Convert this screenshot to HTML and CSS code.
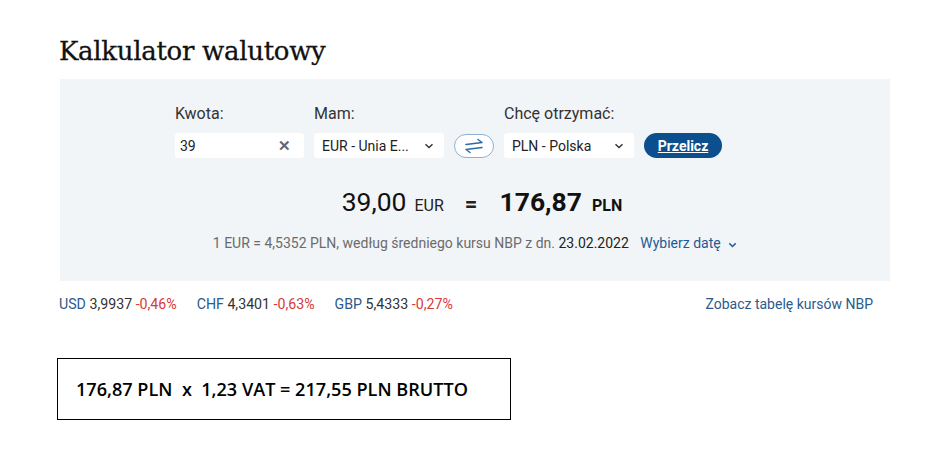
FILE: index.html
```html
<!DOCTYPE html>
<html>

<head>
    <title>Kalkulator walutowy</title>
    <meta charset="UTF-8">
    <link rel="stylesheet" href="styles.css">
</head>

<body>
    <div class="page">
        <h1>Kalkulator walutowy</h1>

        <div class="calc">
            <form class="calc-form">
                <label class="lbl col-amount" for="amount">Kwota:</label>
                <label class="lbl col-have" for="have">Mam:</label>
                <label class="lbl col-want" for="want">Chcę otrzymać:</label>

                <div class="field col-amount">
                    <span id="amount">39</span>
                    <span class="clear">&#x2715;</span>
                </div>
                <div class="field col-have">
                    <span id="have">EUR - Unia E...</span>
                    <svg class="chev" width="10" height="6" viewBox="0 0 10 6"><path d="M1.5 1.2 5 4.6 8.5 1.2" fill="none" stroke="#333" stroke-width="1.4"/></svg>
                </div>
                <button type="button" class="swap">
                    <svg width="26" height="16" viewBox="0 0 26 16">
                        <path d="M5 6.5 21 4.5M17 1.5l4 3" fill="none" stroke="#2d6aa8" stroke-width="1.5" stroke-linecap="round"/>
                        <path d="M21 9.5 5 11.5M9 14.5l-4-3" fill="none" stroke="#2d6aa8" stroke-width="1.5" stroke-linecap="round"/>
                    </svg>
                </button>
                <div class="field col-want">
                    <span id="want">PLN - Polska</span>
                    <svg class="chev" width="10" height="6" viewBox="0 0 10 6"><path d="M1.5 1.2 5 4.6 8.5 1.2" fill="none" stroke="#333" stroke-width="1.4"/></svg>
                </div>
                <button type="button" class="convert">Przelicz</button>
            </form>

            <div class="result">
                <span class="num">39,00</span><span class="cur">EUR</span>
                <span class="eq">=</span>
                <span class="num strong">176,87</span><span class="cur strong">PLN</span>
            </div>

            <div class="rate">
                1 EUR = 4,5352 PLN, według średniego kursu NBP z dn. <span class="date">23.02.2022</span>
                <a class="pick">Wybierz datę
                    <svg width="9" height="6" viewBox="0 0 10 6"><path d="M1.5 1.2 5 4.6 8.5 1.2" fill="none" stroke="#1f5a96" stroke-width="1.6"/></svg>
                </a>
            </div>
        </div>

        <div class="quotes">
            <ul>
                <li><span class="code">USD</span> 3,9937 <span class="down">-0,46%</span></li>
                <li><span class="code">CHF</span> 4,3401 <span class="down">-0,63%</span></li>
                <li><span class="code">GBP</span> 5,4333 <span class="down">-0,27%</span></li>
            </ul>
            <a class="table-link">Zobacz tabelę kursów NBP</a>
        </div>

        <div class="vat">176,87 PLN&nbsp; x&nbsp; 1,23 VAT = 217,55 PLN BRUTTO</div>
    </div>
</body>

</html>
```

FILE: styles.css
```css
html {
    font-size: 16px;
    font-family: Roboto, sans-serif;
}

body {
    margin: 0;
    background-color: #ffffff;
    color: #222;
}

a {
    cursor: pointer;
}

ul {
    margin: 0;
    padding: 0;
    list-style: none;
}

.page {
    width: 830px;
    padding: 33px 0 0 60px;
}

h1 {
    font-family: 'DejaVu Serif', serif;
    font-weight: normal;
    font-size: 26px;
    letter-spacing: -0.3px;
    color: #111;
    -webkit-text-stroke: 0.3px #111;
    margin: 0 0 9px -1px;
    line-height: 37px;
}

.calc {
    background-color: #f2f5f8;
    height: 202px;
    box-sizing: border-box;
    padding-top: 25px;
}

.calc-form {
    display: grid;
    grid-template-columns: 129px 130px 40px 130px 78px;
    grid-template-rows: 20px 25px;
    column-gap: 10px;
    row-gap: 9px;
    margin-left: 115px;
}

.lbl {
    grid-row: 1;
    font-size: 16px;
    color: #333;
    line-height: 20px;
}

.col-amount {
    grid-column: 1;
}

.col-have {
    grid-column: 2;
}

.col-want {
    grid-column: 4;
}

.field {
    grid-row: 2;
    background-color: #fff;
    border-radius: 3px;
    display: flex;
    align-items: center;
    justify-content: space-between;
    padding: 0 9px 0 5px;
    font-size: 14px;
    color: #222;
}

.field.col-have,
.field.col-want {
    padding-left: 8px;
}

.clear {
    color: #666;
    font-size: 15px;
    font-weight: bold;
    margin-right: 4px;
}

.chev {
    margin-right: 1px;
}

.swap {
    grid-row: 2;
    grid-column: 3;
    align-self: center;
    height: 24px;
    margin-top: 1px;
    border: 1px solid #8fb0d2;
    border-radius: 12px;
    background: #fff;
    padding: 0;
    display: flex;
    align-items: center;
    justify-content: center;
    cursor: pointer;
}

.convert {
    grid-row: 2;
    grid-column: 5;
    background-color: #0b4f8e;
    color: #fff;
    border: none;
    border-radius: 13px;
    font-family: inherit;
    font-size: 14px;
    font-weight: bold;
    text-decoration: underline;
    cursor: pointer;
    padding: 0;
}

.result {
    display: flex;
    justify-content: center;
    align-items: baseline;
    margin-top: 28px;
    margin-left: 14px;
    height: 32px;
}

.num {
    font-size: 26.5px;
    color: #111;
}

.cur {
    font-size: 16px;
    margin-left: 8px;
    color: #222;
}

.cur.strong {
    margin-left: 10px;
}

.eq {
    font-size: 22px;
    font-weight: bold;
    margin: 0 22px 0 21px;
}

.strong {
    font-weight: bold;
    color: #111;
}

.rate {
    text-align: center;
    margin-top: 17px;
    font-size: 14px;
    color: #6b6b6b;
}

.date {
    color: #222;
}

.pick {
    color: #1f5a96;
    margin-left: 8px;
}

.pick svg {
    margin-left: 4px;
}

.quotes {
    display: flex;
    justify-content: space-between;
    align-items: center;
    font-size: 14.2px;
    color: #333;
    margin-top: 15px;
    padding: 0 17px 0 0;
    margin-left: -1px;
}

.quotes ul {
    display: flex;
    gap: 20px;
}

.code {
    color: #2c5a8c;
}

.down {
    color: #d73a3a;
}

.table-link {
    color: #2c5a8c;
    font-size: 14px;
}

.vat {
    margin-top: 46px;
    margin-left: -3px;
    width: 434px;
    height: 60px;
    border: 1px solid #000;
    padding-left: 18px;
    display: flex;
    align-items: center;
    font-family: 'Open Sans', sans-serif;
    font-weight: 600;
    font-size: 18.1px;
    color: #000;
}
```
